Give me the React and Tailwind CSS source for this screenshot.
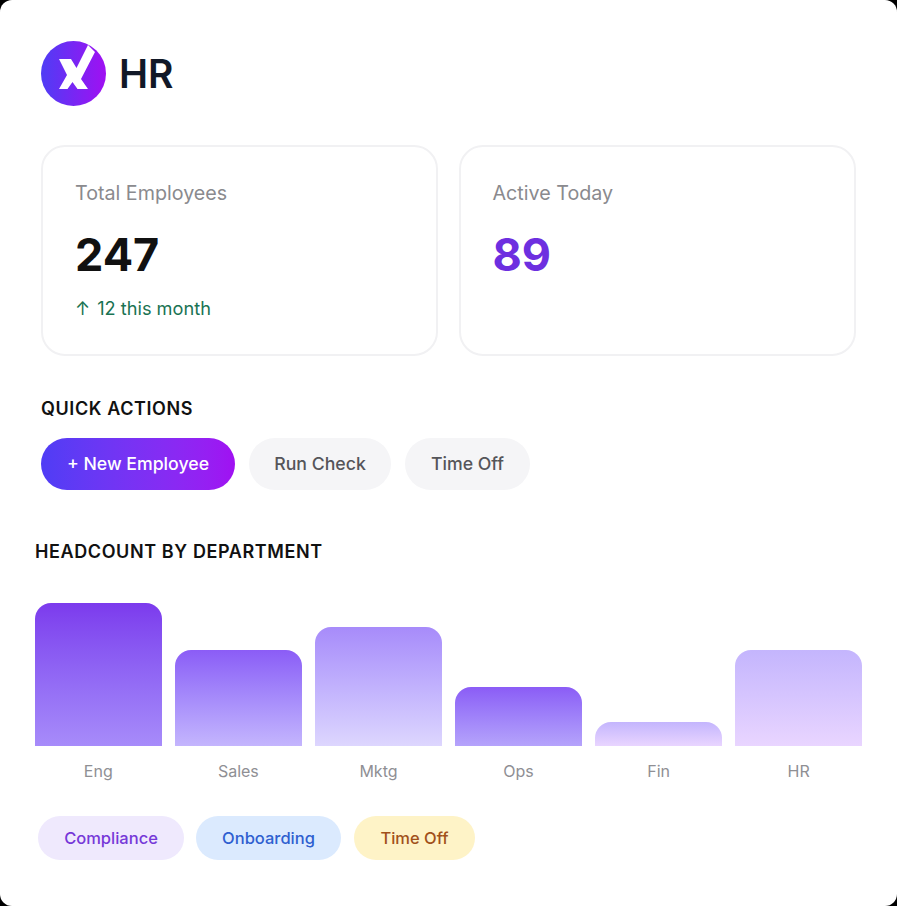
import React from 'react';

const font = { fontFamily: 'Inter, "Liberation Sans", sans-serif' };

const bars = [
  { label: 'Eng', height: 'h-[143px]', fill: 'from-[#7c3aed] to-[#a78bfa]' },
  { label: 'Sales', height: 'h-[96px]', fill: 'from-[#8b5cf6] to-[#c4b5fd]' },
  { label: 'Mktg', height: 'h-[119px]', fill: 'from-[#a78bfa] to-[#ddd6fe]' },
  { label: 'Ops', height: 'h-[59px]', fill: 'from-[#8b5cf6] to-[#b5a3fb]' },
  { label: 'Fin', height: 'h-[24px]', fill: 'from-[#c4b5fd] to-[#e9d5ff]' },
  { label: 'HR', height: 'h-[96px]', fill: 'from-[#c4b5fd] to-[#e9d5ff]' },
];

const Logo = () => (
  <svg width="65" height="65" viewBox="41 41 65 65" className="shrink-0">
    <defs>
      <linearGradient id="logoFill" x1="0" y1="0" x2="1" y2="0">
        <stop offset="0" stopColor="#4f3df5" />
        <stop offset="1" stopColor="#a010f2" />
      </linearGradient>
    </defs>
    <circle cx="73.5" cy="73.5" r="32.5" fill="url(#logoFill)" />
    <polygon
      fill="#ffffff"
      points="59,59 71,59 76.5,68 88,45 95,52 81,79 88,89 77.5,89 72.5,82 67.5,89 59,89 67,75"
    />
  </svg>
);

const StatCard = ({ title, children }) => (
  <div className="w-[397px] h-[211px] rounded-[24px] border-2 border-[#f1f1f3] bg-white px-[32px] pt-[32px]">
    <div className="text-[19.7px] leading-[28px] text-[#8a8a8e]">{title}</div>
    {children}
  </div>
);

export default function App() {
  return (
    <div className="w-[897px] h-[906px] bg-black" style={font}>
      <div className="w-full h-full rounded-xl bg-white pt-[41px] overflow-hidden">
        <div className="flex items-center gap-[13px] pl-[41px]">
          <Logo />
          <span className="text-[39px] leading-[65px] font-semibold text-[#111827]">HR</span>
        </div>

        <div className="mt-[39px] flex gap-[20.5px] pl-[41px]">
          <StatCard title="Total Employees">
            <div className="mt-[20px] text-[45px] leading-[56px] font-bold text-[#111111]">247</div>
            <div className="mt-[12px] text-[18.2px] leading-[26px] text-[#1a7353]">
              ↑<span className="ml-[7px]">12 this month</span>
            </div>
          </StatCard>
          <StatCard title="Active Today">
            <div className="mt-[20px] text-[45px] leading-[56px] font-bold text-[#6d2fe0]">89</div>
          </StatCard>
        </div>

        <div className="mt-[40px] pl-[41px] text-[18px] leading-[26px] font-semibold tracking-[0.6px] text-[#111111]">
          QUICK ACTIONS
        </div>
        <div className="mt-[16px] flex gap-[14px] pl-[41px] text-[17.7px] font-medium">
          <div className="flex h-[52px] w-[194px] items-center justify-center rounded-full bg-gradient-to-r from-[#4f3df5] to-[#a010f2] text-white">
            + New Employee
          </div>
          <div className="flex h-[52px] w-[142px] items-center justify-center rounded-full bg-[#f5f5f7] text-[#55555a]">
            Run Check
          </div>
          <div className="flex h-[52px] w-[125px] items-center justify-center rounded-full bg-[#f5f5f7] text-[#55555a]">
            Time Off
          </div>
        </div>

        <div className="mt-[49px] pl-[35px] text-[18px] leading-[26px] font-semibold tracking-[0.6px] text-[#111111]">
          HEADCOUNT BY DEPARTMENT
        </div>

        <div className="ml-[35px] mt-[38px] grid w-[827px] h-[143px] grid-cols-6 items-end gap-x-[13.5px]">
          {bars.map((bar) => (
            <div key={bar.label} className={`${bar.height} rounded-t-[16px] bg-gradient-to-b ${bar.fill}`} />
          ))}
        </div>
        <div className="ml-[35px] mt-[13px] grid w-[827px] grid-cols-6 gap-x-[13.5px] text-[16px] leading-[24px] text-[#8f8f94]">
          {bars.map((bar) => (
            <div key={bar.label} className="text-center">
              {bar.label}
            </div>
          ))}
        </div>

        <div className="mt-[33px] flex gap-[12px] pl-[38px] text-[16.5px] font-medium">
          <div className="flex h-[44px] w-[146px] items-center justify-center rounded-full bg-[#efe9fd] text-[#7638d8]">
            Compliance
          </div>
          <div className="flex h-[44px] w-[145px] items-center justify-center rounded-full bg-[#dbeafe] text-[#2f5fd0]">
            Onboarding
          </div>
          <div className="ml-[1px] flex h-[44px] w-[121px] items-center justify-center rounded-full bg-[#fef3c7] text-[#a1501a]">
            Time Off
          </div>
        </div>
      </div>
    </div>
  );
}
